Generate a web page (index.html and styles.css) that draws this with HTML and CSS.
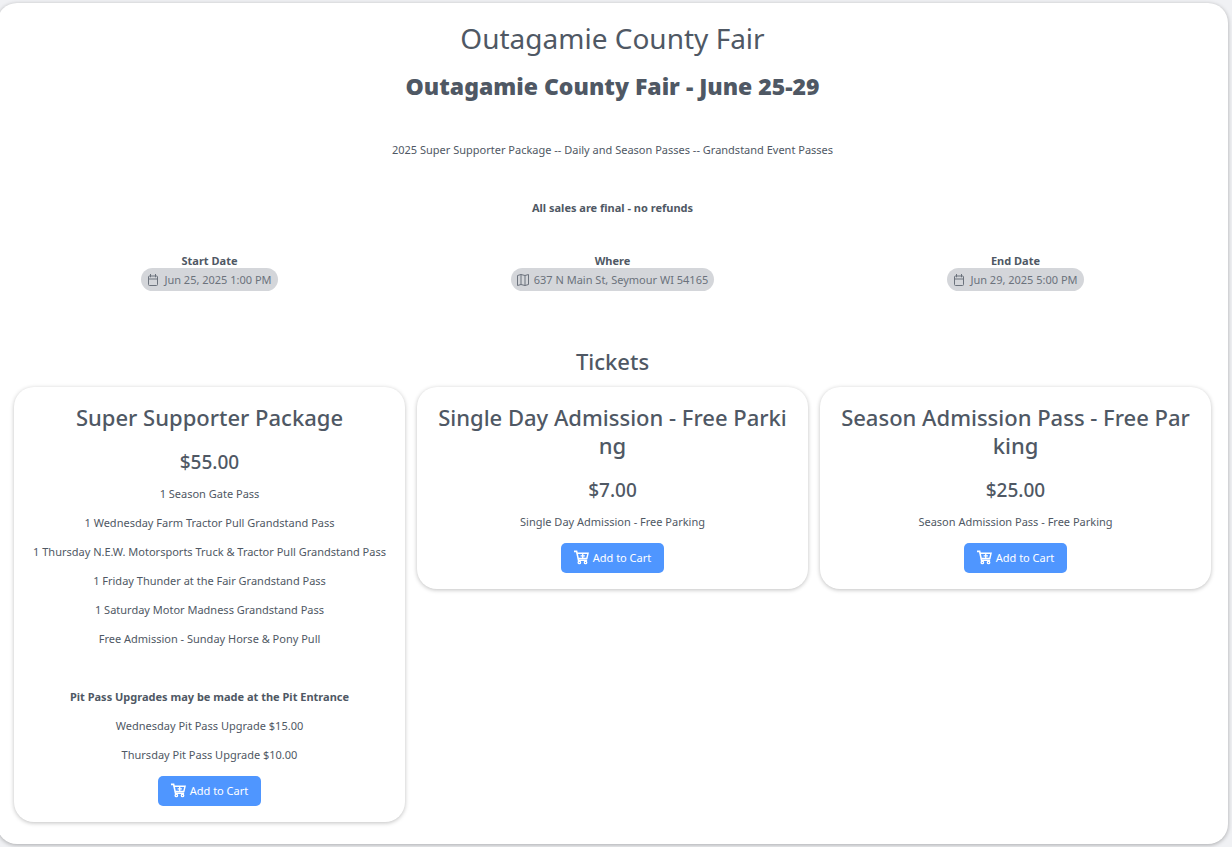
FILE: index.html
```html
<!DOCTYPE html>
<html lang="en">
<head>
  <meta charset="UTF-8">
  <meta name="viewport" content="width=device-width, initial-scale=1">
  <title>Outagamie County Fair</title>
  <link rel="stylesheet" href="styles.css">
</head>
<body>
  <!-- Shared icons -->
  <svg class="icon-defs" aria-hidden="true">
    <symbol id="icon-calendar" viewBox="0 0 12 12">
      <path d="M2.500 2h7a1 1 0 0 1 1 1v7.500a1 1 0 0 1-1 1h-7a1 1 0 0 1-1-1V3a1 1 0 0 1 1-1zM1.500 5h9M3.500 0v3.300M8.500 0v3.300" fill="none" stroke="currentColor"/>
    </symbol>
    <symbol id="icon-map" viewBox="0 0 12 12">
      <path d="M.5 1.500l3.500-1 4 1 3.500-1v10l-3.500 1-4-1-3.500 1zM4 .5v10M8 1.500v10" fill="none" stroke="currentColor" stroke-linejoin="round"/>
    </symbol>
    <symbol id="icon-cart" viewBox="0 0 16 16">
      <path d="M0 1.500h2.800l2 9.500h9.200" fill="none" stroke="currentColor" stroke-width="1.700"/>
      <path d="M3 3.500h12l-1.300 5.500H4.500" fill="none" stroke="currentColor" stroke-width="1.500"/>
      <path d="M9.300 4v4.500M7 6.300h4.600" fill="none" stroke="currentColor" stroke-width="1.400"/>
      <circle cx="5.700" cy="13.300" r="1.300" fill="none" stroke="currentColor" stroke-width="1.400"/>
      <circle cx="12.300" cy="13.300" r="1.300" fill="none" stroke="currentColor" stroke-width="1.400"/>
    </symbol>
  </svg>

  <main class="event">
    <h1>Outagamie County Fair</h1>
    <h2 class="event-subtitle">Outagamie County Fair - June 25-29</h2>
    <div class="event-description">
      <p>2025 Super Supporter Package -- Daily and Season Passes -- Grandstand Event Passes</p>
      <p><strong>All sales are final - no refunds</strong></p>
    </div>

    <!-- Dates and location -->
    <div class="event-info">
      <div>
        <strong>Start Date</strong>
        <span class="badge"><svg class="icon"><use href="#icon-calendar"/></svg>Jun 25, 2025 1:00 PM</span>
      </div>
      <div>
        <strong>Where</strong>
        <span class="badge"><svg class="icon"><use href="#icon-map"/></svg>637 N Main St, Seymour WI 54165</span>
      </div>
      <div>
        <strong>End Date</strong>
        <span class="badge"><svg class="icon"><use href="#icon-calendar"/></svg>Jun 29, 2025 5:00 PM</span>
      </div>
    </div>

    <h2 class="tickets-title">Tickets</h2>
    <div class="tickets">
      <section class="ticket">
        <h3>Super Supporter Package</h3>
        <div class="price">$55.00</div>
        <p>1 Season Gate Pass</p>
        <p>1 Wednesday Farm Tractor Pull Grandstand Pass</p>
        <p>1 Thursday N.E.W. Motorsports Truck &amp; Tractor Pull Grandstand Pass</p>
        <p>1 Friday Thunder at the Fair Grandstand Pass</p>
        <p>1 Saturday Motor Madness Grandstand Pass</p>
        <p>Free Admission - Sunday Horse &amp; Pony Pull</p>
        <p>&nbsp;</p>
        <p><strong>Pit Pass Upgrades may be made at the Pit Entrance</strong></p>
        <p>Wednesday Pit Pass Upgrade $15.00</p>
        <p>Thursday Pit Pass Upgrade $10.00</p>
        <button type="button" class="btn"><svg class="icon-cart"><use href="#icon-cart"/></svg>Add to Cart</button>
      </section>
      <section class="ticket">
        <h3>Single Day Admission - Free Parking</h3>
        <div class="price">$7.00</div>
        <p>Single Day Admission - Free Parking</p>
        <button type="button" class="btn"><svg class="icon-cart"><use href="#icon-cart"/></svg>Add to Cart</button>
      </section>
      <section class="ticket">
        <h3>Season Admission Pass - Free Parking</h3>
        <div class="price">$25.00</div>
        <p>Season Admission Pass - Free Parking</p>
        <button type="button" class="btn"><svg class="icon-cart"><use href="#icon-cart"/></svg>Add to Cart</button>
      </section>
    </div>
  </main>
</body>
</html>
```

FILE: styles.css
```css
* {
  box-sizing: border-box;
}
body {
  margin: 0;
  padding: 3px 4px 3px 0;
  background: #f0f1f4;
  color: #4f5864;
  font-family: "Segoe UI", "Noto Sans", sans-serif;
  font-size: 11px;
  line-height: 20px;
  overflow-x: hidden;
}
h1, h2, h3, p {
  margin: 0;
}
.icon-defs {
  display: none;
}
.event {
  margin-left: -3px;
  padding: 17px 17px 22px;
  background: #fff;
  border-radius: 20px;
  box-shadow: 0 1px 4px rgba(0,0,0,0.3);
  text-align: center;
}
h1 {
  font-size: 28px;
  font-weight: 400;
  line-height: 36px;
}
.event-subtitle {
  margin-top: 16px;
  font-size: 23px;
  font-weight: 900;
  line-height: 28px;
}
.event-description {
  margin-top: 40px;
}
.event-description p + p {
  margin-top: 38px;
}
/* Dates and location */
.event-info {
  display: grid;
  grid-template-columns: repeat(3, 1fr);
  gap: 12px;
  margin-top: 35px;
}
.event-info strong {
  display: block;
  line-height: 15px;
}
.badge {
  display: inline-flex;
  align-items: center;
  gap: 5px;
  height: 23px;
  padding: 0 6px;
  border-radius: 12px;
  background: #d4d6da;
  color: #6b727c;
}
.icon {
  width: 12px;
  height: 12px;
}
.tickets-title {
  margin-top: 55px;
  font-size: 22px;
  font-weight: 500;
  line-height: 28px;
}
.tickets {
  display: grid;
  grid-template-columns: repeat(3, 1fr);
  align-items: start;
  gap: 12px;
  margin-top: 12px;
}
.ticket {
  padding: 16px;
  background: #fff;
  border-radius: 20px;
  box-shadow: 0 1px 4px rgba(0,0,0,0.25);
}
.ticket h3 {
  font-size: 22px;
  font-weight: 500;
  line-height: 28px;
  word-break: break-all;
}
.price {
  margin: 19px 0 10px;
  font-size: 19px;
  font-weight: 500;
  line-height: 24px;
}
.ticket p {
  margin-bottom: 9px;
}
.btn {
  display: inline-flex;
  align-items: center;
  gap: 4px;
  height: 30px;
  margin-top: 2px;
  padding: 0 13px;
  border: none;
  border-radius: 5px;
  background: #4f96ff;
  color: #fff;
  font: inherit;
  cursor: pointer;
}
.btn:hover {
  background: #3a84f0;
}
.icon-cart {
  width: 15px;
  height: 15px;
}
```
